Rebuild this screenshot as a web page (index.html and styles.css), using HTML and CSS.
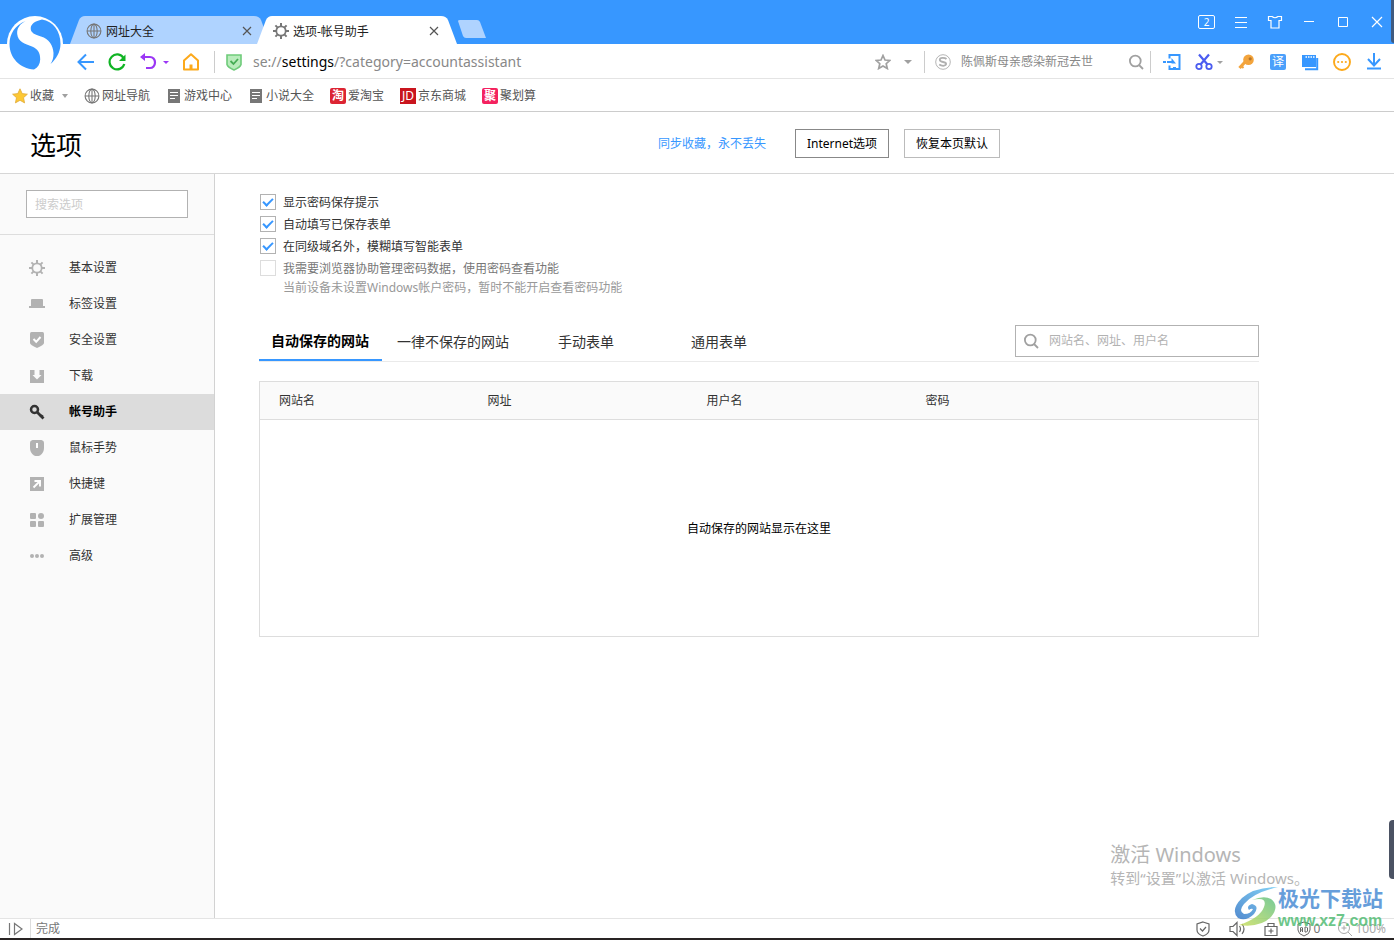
FILE: index.html
```html
<!DOCTYPE html>
<html lang="zh-CN">
<head>
<meta charset="utf-8">
<title>选项-帐号助手</title>
<link rel="stylesheet" href="styles.css">
</head>
<body>
<svg class="defs" aria-hidden="true">
  <symbol id="gear" viewBox="0 0 16 16"><circle cx="8" cy="8" r="4.7" fill="none" stroke="currentColor" stroke-width="1.8"/><path d="M8 0v3M8 13v3M0 8h3M13 8h3M2.4 2.4l2 2M11.6 11.6l2 2M2.4 13.6l2-2M11.6 4.4l2-2" stroke="currentColor" stroke-width="2"/></symbol>
  <symbol id="globe" viewBox="0 0 16 16"><g fill="none" stroke="currentColor" stroke-width="1.1"><circle cx="8" cy="8" r="6.9"/><ellipse cx="8" cy="8" rx="3.2" ry="6.9"/><path d="M8 1v14M1 8h14"/></g></symbol>
  <symbol id="note" viewBox="0 0 14 16"><path d="M1 1h12v14H1z" fill="#777"/><path d="M3 4.5h8M3 7.5h8M3 10.5h5" stroke="#fff" stroke-width="1.2"/></symbol>
  <symbol id="search" viewBox="0 0 16 16"><g fill="none" stroke="currentColor" stroke-width="1.8"><circle cx="7.3" cy="7" r="5.4"/><path d="M11 11l4 4"/></g></symbol>
  <symbol id="close" viewBox="0 0 10 10"><path d="M1 1l8 8M9 1L1 9" stroke="currentColor" stroke-width="1.2"/></symbol>
</svg>

<header class="titlebar">
  <svg class="logo" viewBox="0 0 56 56" aria-label="浏览器标志">
    <circle cx="28" cy="28" r="28" fill="#fff"/>
    <path d="M35 3.500C28 5 24 8 23.700 12C23.500 17 28 18.500 34 20.500C42 23 46 29 46.500 37C46.600 42 45.500 45 43.500 48C49 43.500 53.500 36 53.500 28C53.500 15 46 5 35 3.500z" fill="#3797ff"/>
    <path d="M18.500 5C8 9 2.500 18 2.500 28C2.500 42 13 52.500 27 53.500C31 51.500 33 48 33.200 43.500C33.300 37 31 33 25 30.500C18 28 11 26 10.200 18C9.800 12 13 8 18.500 5z" fill="#3797ff"/>
  </svg>
  <nav class="tabs">
    <div class="tab tab-idle"><svg class="i16"><use href="#globe"/></svg><span class="tab-name">网址大全</span><button class="plain tab-close" aria-label="关闭"><svg class="i10"><use href="#close"/></svg></button></div>
    <div class="tab tab-active"><svg class="i16"><use href="#gear"/></svg><span class="tab-name">选项-帐号助手</span><button class="plain tab-close" aria-label="关闭"><svg class="i10"><use href="#close"/></svg></button></div>
    <button class="plain new-tab" aria-label="新建标签"></button>
  </nav>
  <div class="window-buttons">
    <button class="plain count">2</button>
    <button class="plain" aria-label="菜单"><svg class="i16" viewBox="0 0 16 16"><path d="M2 3.500h12M2 8.500h12M2 13.500h12" stroke="#fff"/></svg></button>
    <button class="plain" aria-label="皮肤"><svg class="i16" viewBox="0 0 16 16"><path d="M1.500 2.500h3.500q3 2.500 6 0h3.500v4h-2.500v7.500h-8v-7.500h-2.500z" fill="none" stroke="#fff" stroke-width="1.2"/></svg></button>
    <button class="plain" aria-label="最小化"><svg class="i16" viewBox="0 0 16 16"><path d="M3 7.500h10" stroke="#fff"/></svg></button>
    <button class="plain" aria-label="最大化"><svg class="i16" viewBox="0 0 16 16"><path d="M3.500 3.500h9v9h-9z" fill="none" stroke="#fff"/></svg></button>
    <button class="plain" aria-label="关闭窗口"><svg class="i16" viewBox="0 0 16 16"><path d="M3 3l10 10M13 3L3 13" stroke="#fff" stroke-width="1.2"/></svg></button>
  </div>
  <span class="corner-strip"></span>
</header>

<div class="toolbar">
  <div class="nav-buttons">
    <button class="plain" aria-label="后退"><svg class="i18" viewBox="0 0 18 18"><path d="M17 9H2M9 1.500L1.500 9L9 16.500" fill="none" stroke="#3797ff" stroke-width="2"/></svg></button>
    <button class="plain" aria-label="刷新"><svg class="i18" viewBox="0 0 18 18"><path d="M15.500 5A7.500 7.500 0 1 0 16.300 11" fill="none" stroke="#10b424" stroke-width="2.2"/><path d="M17.500 1.500v6.500H11z" fill="#10b424"/></svg></button>
    <button class="plain undo" aria-label="撤销"><svg class="i18" viewBox="0 0 18 18"><path d="M3 4h8a5 5.500 0 0 1 0 11H7" fill="none" stroke="#9b37f5" stroke-width="2.200"/><path d="M6 0v8L1 4z" fill="#9b37f5"/></svg><i class="caret purple"></i></button>
    <button class="plain" aria-label="主页"><svg class="i18" viewBox="0 0 18 18"><path d="M2 16.500V7.500L9 1.200l7 6.300v9z" fill="none" stroke="#fca91b" stroke-width="2" stroke-linejoin="round"/><path d="M7.500 11.500h3v5h-3z" fill="#fca91b"/></svg></button>
  </div>
  <div class="address">
    <svg class="i18" viewBox="0 0 18 18"><path d="M2 2h14v9.500q-1 3-7 5.500q-6-2.500-7-5.500z" fill="#b9ecbc" stroke="#6fcb7a" stroke-width="1.600"/><path d="M5.500 8l3 3l4.500-5" fill="none" stroke="#46ad55" stroke-width="1.800"/></svg>
    <div class="url" role="textbox" aria-label="地址" contenteditable="true" spellcheck="false">se://<b>settings</b>/?category=accountassistant</div>
    <button class="plain" aria-label="收藏本页"><svg class="i16" viewBox="0 0 16 16"><path d="M8 1.500l2 4.500 4.800.5-3.600 3.200 1.100 4.800L8 12l-4.300 2.500 1.100-4.800L1.200 6.500 6 6z" fill="none" stroke="#a0a0a0" stroke-width="1.700"/></svg></button>
    <i class="caret"></i>
  </div>
  <div class="web-search">
    <svg class="i16" viewBox="0 0 16 16"><circle cx="8" cy="8" r="7.300" fill="none" stroke="#b5b5b5"/><path d="M11.500 5q-1.500-1.300-4-1.200q-2.800.2-2.700 2t3.200 2.200q3.200.5 3.100 2t-2.900 1.800q-2.200 0-4-1.200" fill="none" stroke="#b0b0b0" stroke-width="1.800"/></svg>
    <input class="bare" type="text" aria-label="网页搜索" placeholder="陈佩斯母亲感染新冠去世">
    <button class="plain grey" aria-label="搜索"><svg class="i16"><use href="#search"/></svg></button>
  </div>
  <div class="tools">
    <button class="plain" aria-label="登录"><svg class="i18" viewBox="0 0 18 18"><path d="M6.500 5.500V2h10v14h-10v-3.500" fill="none" stroke="#3797ff" stroke-width="2"/><path d="M0 9h3M4 9h6" stroke="#3797ff" stroke-width="2"/><path d="M8.500 5l4.500 5.500H8.500zM10 14h3v1.500h-3z" fill="#3797ff"/></svg></button>
    <button class="plain cut" aria-label="截图"><svg class="i18" viewBox="0 0 18 18"><path d="M4 1.500l8.500 10M14 1.500L5.500 11.500" stroke="#4b5cf0" stroke-width="2.200"/><g fill="none" stroke="#4b5cf0" stroke-width="1.800"><circle cx="4" cy="13.500" r="2.700"/><circle cx="14" cy="13.500" r="2.700"/></g></svg><i class="caret"></i></button>
    <button class="plain" aria-label="密码"><svg class="i18" viewBox="0 0 18 18"><path d="M8.500 8.500L2.500 15" stroke="#f3a43c" stroke-width="3.200"/><path d="M4 12.500l2.500 2.500" stroke="#f3a43c" stroke-width="2"/><circle cx="11.500" cy="6.800" r="5.300" fill="#f3a43c"/><circle cx="13.200" cy="5.800" r="1.600" fill="#b5752a"/></svg></button>
    <button class="plain translate">译</button>
    <button class="plain" aria-label="视频"><svg class="i18" viewBox="0 0 18 18"><path d="M1 2h14v12H1z" fill="#3797ff"/><path d="M16.200 5v11.200H4" fill="none" stroke="#3797ff" stroke-width="2"/><path d="M4.500 4h9" stroke="#fff" stroke-width="1.500" stroke-dasharray="1.500 1"/></svg></button>
    <button class="plain" aria-label="更多"><svg class="i18" viewBox="0 0 18 18"><circle cx="9" cy="9" r="8" fill="none" stroke="#fca91b" stroke-width="1.900"/><g fill="#fca91b"><circle cx="5.200" cy="9" r="1.100"/><circle cx="9" cy="9" r="1.100"/><circle cx="12.800" cy="9" r="1.100"/></g></svg></button>
    <button class="plain" aria-label="下载"><svg class="i18" viewBox="0 0 18 18"><path d="M9 0v12M3 6l6 6.500L15 6M2 15.500h14" fill="none" stroke="#3797ff" stroke-width="2"/></svg></button>
  </div>
</div>

<nav class="bookmarks">
  <a href="#" class="fav"><svg class="i16" viewBox="0 0 16 16"><path d="M8 .8l2.200 4.800 5.200.6-3.900 3.500 1.100 5.200L8 12.300l-4.600 2.600 1.100-5.200L.6 6.200l5.200-.6z" fill="#fdc834" stroke="#e0a93a" stroke-width=".8"/></svg>收藏<i class="caret"></i></a>
  <a href="#"><svg class="i16 grey-dark"><use href="#globe"/></svg>网址导航</a>
  <a href="#"><svg class="i16"><use href="#note"/></svg>游戏中心</a>
  <a href="#"><svg class="i16"><use href="#note"/></svg>小说大全</a>
  <a href="#"><span class="site red">淘</span>爱淘宝</a>
  <a href="#"><span class="site jd">JD</span>京东商城</a>
  <a href="#"><span class="site pink">聚</span>聚划算</a>
</nav>

<div class="page-head">
  <div class="page-head-inner">
    <h1>选项</h1>
    <a href="#" class="sync">同步收藏，永不丢失</a>
    <button class="box-button strong">Internet选项</button>
    <button class="box-button">恢复本页默认</button>
  </div>
</div>

<div class="layout">
  <aside class="sidebar">
    <div class="side-search"><input type="text" aria-label="搜索选项" placeholder="搜索选项"></div>
    <nav class="menu">
      <a href="#"><svg class="i16"><use href="#gear"/></svg>基本设置</a>
      <a href="#"><svg class="i16" viewBox="0 0 16 16"><path d="M3 3h10q1 0 1 1v6h2v2H0v-2h2V4q0-1 1-1z" fill="currentColor"/></svg>标签设置</a>
      <a href="#"><svg class="i16" viewBox="0 0 16 16"><path d="M2.500 0h11q1.500 0 1.500 1.500V11q0 2-7 5q-7-3-7-5V1.500Q1 0 2.500 0z" fill="currentColor"/><path d="M4.500 7l2.700 2.800L11.500 5" fill="none" stroke="#fff" stroke-width="2"/></svg>安全设置</a>
      <a href="#"><svg class="i16" viewBox="0 0 16 16"><path d="M1 2h14v13H1z" fill="currentColor"/><path d="M5.500 2h5v5h2L8 11.500 3.500 7h2z" fill="#fafafa"/></svg>下载</a>
      <a href="#" class="current"><svg class="i16" viewBox="0 0 16 16"><circle cx="5.500" cy="5.500" r="3.500" fill="none" stroke="currentColor" stroke-width="2.500"/><path d="M8 8l6.500 6.500M11.500 13.500l2-2.500" stroke="currentColor" stroke-width="2.800"/></svg>帐号助手</a>
      <a href="#"><svg class="i16" viewBox="0 0 16 16"><path d="M3.500 0h9Q15 .5 15 2.500V8q0 5-4 7.500q-3 1-6 0Q1 13 1 8V2.500Q1 .5 3.500 0z" fill="currentColor"/><path d="M8 3v5" stroke="#fff" stroke-width="2"/></svg>鼠标手势</a>
      <a href="#"><svg class="i16" viewBox="0 0 16 16"><path d="M1 1h14v14H1z" fill="currentColor"/><path d="M4.500 11.500L10.500 5.500M5.500 5h5.500v5.500" fill="none" stroke="#fff" stroke-width="1.900"/></svg>快捷键</a>
      <a href="#"><svg class="i16" viewBox="0 0 16 16"><g fill="currentColor"><rect x="1" y="1" width="6" height="6" rx="1"/><circle cx="12" cy="4" r="3"/><rect x="1" y="9" width="6" height="6" rx="1"/><rect x="9" y="9" width="6" height="6" rx="1"/></g></svg>扩展管理</a>
      <a href="#"><svg class="i16" viewBox="0 0 16 16"><g fill="currentColor"><circle cx="3" cy="8" r="2"/><circle cx="8" cy="8" r="2"/><circle cx="13" cy="8" r="2"/></g></svg>高级</a>
    </nav>
  </aside>

  <main class="content">
    <div class="checks">
      <label><input type="checkbox" checked><span>显示密码保存提示</span></label>
      <label><input type="checkbox" checked><span>自动填写已保存表单</span></label>
      <label><input type="checkbox" checked><span>在同级域名外，模糊填写智能表单</span></label>
      <label class="off"><input type="checkbox" disabled><span>我需要浏览器协助管理密码数据，使用密码查看功能</span></label>
      <p class="hint">当前设备未设置Windows帐户密码，暂时不能开启查看密码功能</p>
    </div>
    <div class="form-tabs">
      <button class="plain selected">自动保存的网站</button>
      <button class="plain wide">一律不保存的网站</button>
      <button class="plain">手动表单</button>
      <button class="plain">通用表单</button>
      <label class="site-search grey"><svg class="i16"><use href="#search"/></svg><input class="bare" type="text" aria-label="搜索网站" placeholder="网站名、网址、用户名"></label>
    </div>
    <table class="sites">
      <colgroup><col class="c-name"><col class="c-mid"><col class="c-mid"><col></colgroup>
      <thead><tr><th>网站名</th><th>网址</th><th>用户名</th><th>密码</th></tr></thead>
      <tbody><tr><td colspan="4">自动保存的网站显示在这里</td></tr></tbody>
    </table>
  </main>
</div>

<footer class="status">
  <button class="plain side-toggle" aria-label="侧边栏"><svg class="i16" viewBox="0 0 16 16"><path d="M2.500 2v12M7.500 2.500v11L15 8z" fill="none" stroke="#777" stroke-width="1.200"/></svg></button>
  <span class="state">完成</span>
  <div class="status-tools">
    <svg class="i16" viewBox="0 0 16 16"><path d="M8 1l6 2v6q0 4-6 6q-6-2-6-6V3zM5 7.500l2.500 2.500L11 6" fill="none" stroke="#666" stroke-width="1.200"/></svg>
    <svg class="i18" viewBox="0 0 18 18"><path d="M2 6.500h3l4-4v13l-4-4H2zM11.500 6q2 3 0 6M14 4q4 5 0 10" fill="none" stroke="#666" stroke-width="1.200"/></svg>
    <svg class="i16" viewBox="0 0 16 16"><path d="M2 5.500h12v9H2zM5 5V2.500h6V5M8 7.500v5M5.500 10h5" fill="none" stroke="#666" stroke-width="1.200"/></svg>
    <span class="ad"><svg class="i16" viewBox="0 0 16 16"><path d="M8 1l6 2v6q0 4-6 6q-6-2-6-6V3zM4.500 11V7l1-1 1 1v4M4.500 9h2M9 6v5h1.500l1-1V7l-1-1z" fill="none" stroke="#666"/></svg>0</span>
    <span class="zoom"><svg class="i16" viewBox="0 0 16 16"><path d="M7 4.500v5M4.500 7h5M11 11l4 4" stroke="#aaa"/><circle cx="7" cy="7" r="5.500" fill="none" stroke="#aaa"/></svg>100%</span>
  </div>
</footer>

<div class="activate"><p class="activate-title">激活 Windows</p><p>转到“设置”以激活 Windows。</p></div>
<div class="brand">
  <svg class="brand-mark" viewBox="0 0 44 42" aria-hidden="true">
    <defs><linearGradient id="sky" x1="0" y1="1" x2="1" y2="0"><stop offset="0" stop-color="#286fc4"/><stop offset="1" stop-color="#66c8f4"/></linearGradient><linearGradient id="leaf" x1="0" y1="1" x2="1" y2="0"><stop offset="0" stop-color="#c9dd54"/><stop offset="1" stop-color="#58be80"/></linearGradient></defs>
    <path d="M44 1Q20 1 8 12Q-4 24 4 32Q12 36 20 28Q26 20 18 18Q12 20 15 24Q17 22 19 23Q17 28 10 28Q4 25 10 18Q19 7 44 1z" fill="url(#sky)"/>
    <path d="M18 14Q34 10 30 21Q26 32 5 39Q26 42 37 31Q46 20 37 13Q30 9 18 14z" fill="url(#leaf)"/>
  </svg>
  <div><p class="brand-name">极光下载站</p><p class="brand-url">www.xz7.com</p></div>
</div>
<span class="edge-widget"></span>
</body>
</html>
```

FILE: styles.css
```css
* { box-sizing: border-box; }
body {
  margin: 0;
  min-height: 100vh;
  display: flex;
  flex-direction: column;
  position: relative;
  overflow-x: hidden;
  background: #fff;
  color: #333;
  font: 12px/16px "Noto Sans", "Noto Sans CJK SC", sans-serif;
}
p, h1 { margin: 0; font-weight: 400; }
a { color: inherit; text-decoration: none; }
svg { display: block; flex: none; }
button, input { font: inherit; color: inherit; }
input { outline: none; min-width: 0; }
.defs { position: absolute; width: 0; height: 0; }
.plain { background: none; border: 0; padding: 0; display: flex; align-items: center; flex: none; }
.bare { border: 0; padding: 0; background: none; flex: 1; }
.grey { color: #a0a0a0; }
.grey-dark { color: #777; }
.i10 { width: 10px; height: 10px; }
.i16 { width: 16px; height: 16px; }
.i18 { width: 18px; height: 18px; }
.caret { flex: none; border: 4px solid transparent; border-top-color: #a0a0a0; border-bottom: 0; }
.caret.purple { border-width: 3px 3px 0; border-top-color: #9b37f5; }

.titlebar { position: relative; height: 44px; display: flex; align-items: flex-end; background: #3797ff; padding-left: 70px; }
.logo { position: absolute; left: 7px; top: 16px; width: 56px; height: 56px; z-index: 2; }
.tabs { display: flex; flex: 1; }
.tab { height: 28px; display: flex; align-items: center; width: 200px; padding: 2px 18px 0 16px; color: #222; clip-path: path("M0 28L9 4Q11 0 15 0H184Q189 0 191 4L200 28z"); }
.tab-idle { background: #afd3ff; margin-right: -13px; }
.tab-active { background: #fff; }
.tab .i16 { color: #777; margin-right: 4px; }
.tab-name { flex: 1; padding-top: 2px; }
.tab-close { color: #555; }
.new-tab { width: 28px; height: 18px; margin: 4px 0 0 1px; background: #afd3ff; clip-path: path("M0 1Q0 0 2 0H19Q21 0 22 2L28 18H8Q6 18 5 16z"); }
.window-buttons { display: flex; align-self: center; align-items: center; gap: 18px; padding-right: 9px; color: #fff; }
.count { width: 17px; height: 14px; border: 1px solid #fff; border-radius: 2px; justify-content: center; font-size: 10px; line-height: 12px; }
.corner-strip { position: absolute; right: 0; top: 0; width: 3px; height: 43px; background: #405b80; border-radius: 0 0 0 3px; }

.toolbar { display: flex; align-items: center; height: 35px; border-bottom: 1px solid #e4e4e4; padding: 2px 0 0 77px; }
.nav-buttons { display: flex; gap: 13px; padding-right: 14px; }
.undo { gap: 6px; }
.address { display: flex; align-items: center; flex: 1; gap: 10px; border-left: 1px solid #ccc; height: 22px; padding: 0 12px 0 10px; }
.address .i16 { margin-right: 3px; }
.url { flex: 1; font-size: 14px; line-height: 20px; color: #888; outline: none; }
.url b { font-weight: 400; color: #000; }
.web-search { display: flex; align-items: center; gap: 10px; width: 227px; height: 22px; border: solid #ccc; border-width: 0 1px; padding: 0 6px 0 10px; }
.web-search input::placeholder { color: #888; opacity: 1; }
.tools { display: flex; gap: 14px; padding: 0 11px 0 12px; }
.cut { gap: 4px; }
.cut .caret { border-width: 3px 3px 0; }
.translate { width: 16px; height: 16px; margin: 1px; justify-content: center; border-radius: 2px; background: #4ba0fb; color: #fff; }

.bookmarks { display: flex; align-items: center; gap: 16px; height: 33px; border-bottom: 1px solid #ccc; padding: 2px 0 0 12px; color: #555; }
.bookmarks a { display: flex; align-items: center; gap: 2px; }
.bookmarks .caret { margin-left: 6px; border-width: 4px 3px 0; }
.site { width: 16px; height: 16px; border-radius: 2px; color: #fff; text-align: center; line-height: 15px; font-weight: 700; }
.red { background: #dc2433; }
.jd { background: #c9151e; border-radius: 0; font-weight: 400; }
.pink { background: #f4225f; }

.page-head { border-bottom: 1px solid #d6d6d6; }
.page-head-inner { display: flex; align-items: center; height: 61px; max-width: 1000px; padding-left: 30px; padding-top: 2px; }
h1 { flex: 1; font-size: 26px; line-height: 40px; color: #000; padding-top: 2px; }
.sync { color: #3797ff; margin-right: 29px; }
.box-button { height: 29px; padding: 0 11px; background: #fff; border: 1px solid #bbb; color: #000; }
.box-button.strong { border-color: #888; margin-right: 15px; }

.layout { flex: 1; display: flex; }
.sidebar { width: 215px; flex: none; background: #fafafa; border-right: 1px solid #d2d2d2; }
.side-search { padding: 16px 26px; border-bottom: 1px solid #ddd; }
.side-search input { display: block; width: 100%; height: 28px; border: 1px solid #b2b2b2; background: #fff; padding: 0 8px; }
.side-search input::placeholder { color: #ccc; }
.menu { padding-top: 15px; }
.menu a { display: flex; align-items: center; gap: 24px; height: 36px; padding-left: 29px; }
.menu .i16 { color: #b2b2b2; }
.menu .current { background: #dcdcdc; color: #000; font-weight: 700; }
.menu .current .i16 { color: #333; }
.content { flex: 1; padding: 17px 44px; min-width: 0; }
.checks { display: flex; flex-direction: column; align-items: flex-start; padding-left: 1px; }
.checks label { display: flex; align-items: center; gap: 7px; height: 22px; }
.checks span { padding-top: 2px; }
.checks input { appearance: none; width: 16px; height: 16px; margin: 0; border: 1px solid #b2b2b2; background: #fff; display: grid; place-items: center; }
.checks input:checked::after { content: ""; box-sizing: border-box; width: 10px; height: 6px; margin-bottom: 3px; border: solid #3797ff; border-width: 0 0 2px 2px; transform: rotate(-45deg); }
.checks input:disabled { border-color: #ddd; }
.off { color: #777; }
.hint { color: #999; padding-left: 23px; line-height: 18px; }
.form-tabs { display: flex; align-items: center; max-width: 1000px; height: 41px; margin-top: 24px; border-bottom: 1px solid #eaeaea; font-size: 14px; }
.form-tabs button { width: 133px; height: 40px; padding: 2px 0 0 15px; }
.form-tabs .selected { width: 123px; padding-left: 12px; border-bottom: 2px solid #3797ff; color: #000; font-weight: 700; }
.form-tabs .wide { width: 161px; }
.site-search { display: flex; align-items: center; gap: 10px; width: 244px; height: 32px; margin-left: auto; border: 1px solid #b2b2b2; padding-left: 7px; font-size: 12px; }
.site-search input::placeholder { color: #b2b2b2; }
.sites { width: 100%; max-width: 1000px; margin-top: 19px; border: 1px solid #ddd; border-collapse: collapse; table-layout: fixed; }
.c-name { width: 209px; }
.c-mid { width: 219px; }
.sites th { height: 38px; padding: 0 0 0 19px; background: #fafafa; border-bottom: 1px solid #ddd; text-align: left; font-weight: 400; }
.sites td { height: 217px; padding: 2px 0 0; text-align: center; color: #000; }

.status { display: flex; align-items: center; height: 22px; border-top: 1px solid #e4e4e4; border-bottom: 2px solid #292424; color: #777; background: #fff; }
.side-toggle { width: 31px; height: 19px; justify-content: center; border-right: 1px solid #ddd; }
.state { flex: 1; padding-left: 5px; }
.status-tools { display: flex; align-items: center; gap: 17px; padding-right: 8px; }
.ad, .zoom { display: flex; align-items: center; gap: 2px; }
.zoom { color: #aaa; }

.activate { position: absolute; right: 85px; bottom: 51px; color: #b5b5b5; font-size: 15px; line-height: 22px; }
.activate-title { font-size: 20px; line-height: 24px; }
.brand { position: absolute; right: 11px; bottom: 8px; display: flex; opacity: 0.8; }
.brand-mark { width: 44px; height: 42px; }
.brand-name { color: #4186d2; font-size: 21px; line-height: 24px; font-weight: 700; }
.brand-url { color: #48b96c; font: 700 16px/22px "Liberation Sans", sans-serif; }
.edge-widget { position: absolute; right: 0; bottom: 61px; width: 5px; height: 59px; border-radius: 4px 0 0 4px; background: #4b5263; }
```
